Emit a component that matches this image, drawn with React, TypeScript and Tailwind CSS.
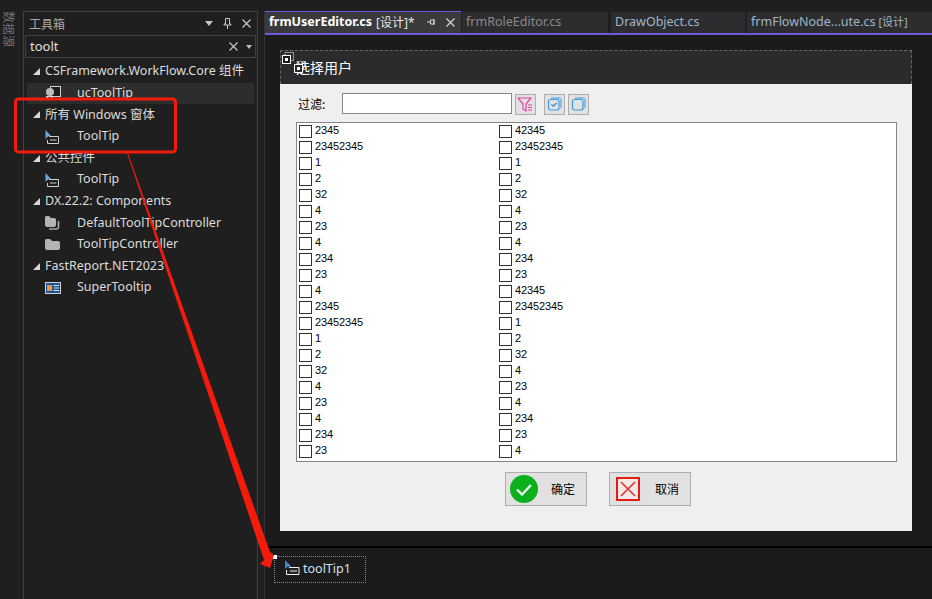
const left = ["2345","23452345","1","2","32","4","23","4","234","23","4","2345","23452345","1","2","32","4","23","4","234","23"];
const right = ["42345","23452345","1","2","32","4","23","4","234","23","42345","23452345","1","2","32","4","23","4","234","23","4"];

function PointerIcon() {
  return (
    <svg width="14" height="14" viewBox="0 0 14 14" className="shrink-0">
      <path d="M0.5 0 L0.5 9 L2.5 7 L3.5 6 L6 6 Z" fill="#6fa8dc" />
      <path d="M4 6.5 H13.5 V13.5 H2.5 V10" fill="none" stroke="#cfcfcf" strokeWidth="1" />
      <path d="M5 10 H11.5" stroke="#cfcfcf" strokeWidth="1" />
    </svg>
  );
}
function UserCtlIcon() {
  return (
    <svg width="16" height="14" viewBox="0 0 16 14" className="shrink-0">
      <rect x="5.5" y="0.5" width="10" height="10" fill="#1c1c1c" stroke="#cfcfcf" />
      <circle cx="5" cy="6" r="4" fill="#bdbdbd" />
      <rect x="1" y="10" width="7" height="4" fill="#cfcfcf" />
      <rect x="3.5" y="11" width="2" height="2" fill="#222" />
    </svg>
  );
}
function FolderIcon({ stacked }: { stacked?: boolean }) {
  return stacked ? (
    <svg width="15" height="14" viewBox="0 0 15 14" className="shrink-0">
      <path d="M13.5 5 V11 Q13.5 13 11 13 H4" fill="none" stroke="#a8a8a8" strokeWidth="1.6" />
      <path d="M0 1.5 Q0 0 1.5 0 H4 L6 2 H9 Q11 2 11 4 V9 Q11 11 9 11 H2 Q0 11 0 9 Z" fill="#b4b4b4" />
    </svg>
  ) : (
    <svg width="15" height="11" viewBox="0 0 15 11" className="shrink-0">
      <path d="M0 1.5 Q0 0 1.5 0 H5 L7 2 H13 Q15 2 15 4 V9 Q15 11 13 11 H2 Q0 11 0 9 Z" fill="#b4b4b4" />
    </svg>
  );
}
function SuperIcon() {
  return (
    <svg width="16" height="12" viewBox="0 0 16 12" className="shrink-0">
      <rect x="0.5" y="0.5" width="15" height="11" fill="#1c4f94" stroke="#d0d0d0" />
      <rect x="2" y="3" width="5" height="6" fill="#e9963c" />
      <path d="M8.5 3.5 H14 M8.5 6 H14 M8.5 8.5 H14" stroke="#dbe6f4" />
    </svg>
  );
}
function GridIcon({ fill }: { fill: string }) {
  return (
    <svg width="12" height="12" viewBox="0 0 12 12">
      <path d="M3 3 V0.5 H11.5 V8.5 H9" fill="none" stroke="#fff" strokeDasharray="1 1" />
      <rect x="0.5" y="3.5" width="8" height="8" fill={fill} stroke="#fff" />
      <rect x="3" y="6" width="3" height="3" fill="#fff" />
    </svg>
  );
}

function Group({ label }: { label: string }) {
  return (
    <div className="h-[21.6px] flex items-center pl-[9px] text-[#dcdcdc]">
      <svg width="7" height="7" viewBox="0 0 7 7" className="shrink-0 mr-[5px]">
        <path d="M7 0 V7 H0 Z" fill="#d8d8d8" />
      </svg>
      <span className="whitespace-nowrap">{label}</span>
    </div>
  );
}
function Item({ label, icon, selected }: { label: string; icon: React.ReactNode; selected?: boolean }) {
  return (
    <div className={"h-[21.6px] flex items-center pl-[18px] mx-[3px] text-[#dcdcdc] " + (selected ? "bg-[#2d2d2d]" : "")}>
      <span className="w-[32px] shrink-0 flex items-center">{icon}</span>
      <span className="whitespace-nowrap">{label}</span>
    </div>
  );
}

function Tab({ children, className }: { children: React.ReactNode; className: string }) {
  return (
    <div className={"h-[21px] flex items-center pl-[4px] bg-[#2d2d30] shrink-0 whitespace-nowrap text-[12.5px] " + className}>
      {children}
    </div>
  );
}

function Check({ label }: { label: string }) {
  return (
    <div className="h-[16px] flex items-center">
      <span className="w-[13px] h-[13px] border border-[#333] bg-white mr-[3px] shrink-0" />
      <span className="-mt-px text-[11px] leading-none tracking-[-0.1px] font-['Liberation_Sans',sans-serif] text-black">{label}</span>
    </div>
  );
}

function SmallBtn({ children, className }: { children: React.ReactNode; className?: string }) {
  return (
    <div className={"w-[21px] h-[21px] border border-[#adadad] bg-[#e1e1e1] flex items-center justify-center " + (className ?? "")}>
      {children}
    </div>
  );
}

function FormBtn({ label, icon }: { label: string; icon: React.ReactNode }) {
  return (
    <div className="w-[82px] h-[34px] border border-[#adadad] bg-[#e1e1e1] flex items-center pl-[4px]">
      <span className="w-[28px] h-[28px] shrink-0 flex items-center justify-center">{icon}</span>
      <span className="ml-[13px] text-[12px] text-black font-['Noto_Sans_CJK_SC',sans-serif]">{label}</span>
    </div>
  );
}

export default function App() {
  return (
    <div className="relative w-[932px] h-[599px] overflow-hidden bg-[#1f1f1f] flex font-['Noto_Sans','Noto_Sans_CJK_SC',sans-serif]">
      {/* side strip */}
      <div className="w-[23px] shrink-0 pt-[11px] pl-[3px]">
        <div className="[writing-mode:vertical-rl] [text-orientation:sideways] text-[12px] leading-[12px] text-[#70707e] font-['Noto_Sans_CJK_SC',sans-serif]">数据源</div>
      </div>

      {/* toolbox */}
      <div className="w-[235px] shrink-0 mt-[11px] border-l border-r border-t border-[#3f3f46] flex flex-col text-[12.5px]">
        <div className="h-[23px] flex items-center pl-[5px] pr-[6px] text-[#a8a8a8] font-['Noto_Sans_CJK_SC',sans-serif]">
          <span className="text-[12px]">工具箱</span>
          <div className="ml-auto flex items-center gap-[10px]">
            <svg width="8" height="5" viewBox="0 0 8 5"><path d="M0 0 H8 L4 5 Z" fill="#c8c8c8" /></svg>
            <svg width="9" height="11" viewBox="0 0 9 11"><path d="M2.5 0.5 H6.5 V6 H8 V7 H1 V6 H2.5 Z M4.5 7 V11" fill="none" stroke="#c8c8c8" /></svg>
            <svg width="9" height="9" viewBox="0 0 9 9"><path d="M0.5 0.5 L8.5 8.5 M8.5 0.5 L0.5 8.5" stroke="#c8c8c8" strokeWidth="1.2" /></svg>
          </div>
        </div>
        <div className="h-[23px] mx-px border border-[#3f3f46] flex items-center pl-[4px] pr-[3px] text-[#e0e0e0] text-[13px]">
          <span>toolt</span>
          <svg width="9" height="9" viewBox="0 0 9 9" className="ml-auto"><path d="M0.5 0.5 L8.5 8.5 M8.5 0.5 L0.5 8.5" stroke="#bdbdbd" strokeWidth="1.4" /></svg>
          <svg width="6" height="4" viewBox="0 0 6 4" className="ml-[8px]"><path d="M0 0 H6 L3 4 Z" fill="#bdbdbd" /></svg>
        </div>
        <div className="pt-[3px] flex flex-col">
          <Group label="CSFramework.WorkFlow.Core 组件" />
          <Item label="ucToolTip" icon={<UserCtlIcon />} selected />
          <Group label="所有 Windows 窗体" />
          <Item label="ToolTip" icon={<PointerIcon />} />
          <Group label="公共控件" />
          <Item label="ToolTip" icon={<PointerIcon />} />
          <Group label="DX.22.2: Components" />
          <Item label="DefaultToolTipController" icon={<FolderIcon stacked />} />
          <Item label="ToolTipController" icon={<FolderIcon />} />
          <Group label="FastReport.NET2023" />
          <Item label="SuperTooltip" icon={<SuperIcon />} />
        </div>
      </div>

      {/* document area */}
      <div className="ml-[6px] flex-1 min-w-0 mt-[11px] flex flex-col border-l border-[#333337]">
        <div className="h-[22px] flex items-end shrink-0">
          <div className="w-[196px] h-[22px] border-t-[1px] border-[#6a5ae0] bg-[#3a3a3d] flex items-center pl-[4px] text-[12.5px] font-bold text-white whitespace-nowrap mr-px shrink-0">
            <span>frmUserEditor.cs</span>
            <span className="ml-[4px] font-normal text-[12px] text-[#e8e8e8]">[设计]*</span>
            <svg width="10" height="7" viewBox="0 0 10 7" className="ml-[12px]"><path d="M3.5 1 H7 V5 H3.5 Z M0 3 H3.5 M7 0 V6" fill="none" stroke="#d8d8d8" /></svg>
            <svg width="9" height="9" viewBox="0 0 9 9" className="ml-[9px]"><path d="M0.5 0.5 L8.5 8.5 M8.5 0.5 L0.5 8.5" stroke="#d0d0d0" strokeWidth="1.3" /></svg>
          </div>
          <Tab className="w-[146px] mr-[3px] text-[#8a8a8a]">frmRoleEditor.cs</Tab>
          <Tab className="w-[134px] mr-[2px] text-[#9fb6c8]">DrawObject.cs</Tab>
          <Tab className="w-[185px] text-[#9fb6c8]">
            <span>frmFlowNode...ute.cs </span>
            <span className="ml-[3px] text-[11px]">[设计]</span>
          </Tab>
        </div>
        <div className="h-[2px] bg-[#6a5ae0] shrink-0" />

        {/* designer */}
        <div className="h-[511px] shrink-0 bg-[#1b1b1b] pt-[15px] pl-[15px]">
          <div className="relative w-[632px] h-[481px] flex flex-col">
            <div className="h-[34px] shrink-0 border border-dashed border-[#666] border-b-0 bg-[#2b2b2b] flex items-center pl-[15px] text-[14px] text-white font-['Noto_Sans_CJK_SC',sans-serif]">
              选择用户
            </div>
            <div className="absolute left-[2px] top-[2px]"><GridIcon fill="#1b1b1b" /></div>
            <div className="absolute left-[14px] top-[11px]"><GridIcon fill="#2b2b2b" /></div>

            <div className="flex-1 bg-[#efefef] flex flex-col pl-[16px]">
              <div className="h-[38px] shrink-0 flex items-start pt-[9px] text-black">
                <span className="w-[2px]" />
                <span className="w-[44px] text-[12px] leading-[21px] font-['Noto_Sans_CJK_SC',sans-serif]">过滤:</span>
                <div className="w-[170px] h-[21px] bg-white border border-[#85858f] mr-[3px]" />
                <SmallBtn className="mt-px">
                  <svg width="17" height="17" viewBox="0 0 17 17">
                    <path d="M1 2 H14 L9 8 V15 L6 13 V8 Z" fill="none" stroke="#e0479e" strokeWidth="1.2" />
                    <path d="M11 9 H15 M11 11.5 H15 M11 14 H15" stroke="#e0479e" strokeWidth="1.2" />
                  </svg>
                </SmallBtn>
                <SmallBtn className="mt-px ml-[8px]">
                  <svg width="15" height="15" viewBox="0 0 15 15">
                    <path d="M4 1 H12 Q14 1 14 3 V11" fill="none" stroke="#3b9bdc" />
                    <rect x="1.5" y="2.5" width="10.5" height="10.5" rx="2" fill="none" stroke="#3b9bdc" strokeWidth="1.2" />
                    <path d="M4.5 7.5 L6.3 9.3 L9.5 6" fill="none" stroke="#3b78c8" strokeWidth="1.1" />
                  </svg>
                </SmallBtn>
                <SmallBtn className="mt-px ml-[3px]">
                  <svg width="15" height="15" viewBox="0 0 15 15">
                    <path d="M4 1 H12 Q14 1 14 3 V11" fill="none" stroke="#3b9bdc" />
                    <rect x="1.5" y="2.5" width="10.5" height="10.5" rx="2" fill="none" stroke="#3b9bdc" strokeWidth="1.2" />
                  </svg>
                </SmallBtn>
              </div>
              <div className="w-[601px] h-[340px] shrink-0 bg-white border border-[#85858f] flex pl-[2px]">
                <div className="w-[200px] flex flex-col">
                  {left.map((t, i) => <Check key={i} label={t} />)}
                </div>
                <div className="flex flex-col">
                  {right.map((t, i) => <Check key={i} label={t} />)}
                </div>
              </div>
              <div className="flex pt-[10px] pl-[209px] gap-[22px]">
                <FormBtn
                  label="确定"
                  icon={
                    <svg width="28" height="28" viewBox="0 0 28 28">
                      <circle cx="14" cy="14" r="14" fill="#0cb01c" />
                      <path d="M7 14.5 L12 19.5 L21 10" fill="none" stroke="#e6f5e6" strokeWidth="2.4" />
                    </svg>
                  }
                />
                <FormBtn
                  label="取消"
                  icon={
                    <svg width="24" height="24" viewBox="0 0 24 24">
                      <rect x="1" y="1" width="22" height="22" fill="#f4e8e8" stroke="#e01e12" strokeWidth="2" />
                      <path d="M5 5 L19 19 M19 5 L5 19" stroke="#e0382c" strokeWidth="1.6" />
                    </svg>
                  }
                />
              </div>
            </div>
          </div>
        </div>

        {/* tray */}
        <div className="h-[2px] bg-black shrink-0" />
        <div className="flex-1 bg-[#1b1b1b] pt-[8px] pl-[9px]">
          <div className="relative w-[92px] h-[27px] border border-dotted border-[#8a8a8a] flex items-center pl-[9px]">
            <span className="absolute -left-[2px] -top-[2px] w-[4px] h-[4px] bg-white" />
            <svg width="16" height="16" viewBox="0 0 16 16" className="shrink-0 -mt-[3px]">
              <path d="M1 0 L1 9 L3.2 7 L5 7 L7 6 Z" fill="#3f83d0" />
              <path d="M5 7.5 H15 V14.5 H2.5 V10" fill="#222" stroke="#f0f0f0" />
              <path d="M6 11 H13" stroke="#f0f0f0" />
            </svg>
            <span className="ml-[3px] text-[12.5px] text-[#cfe0f0]">toolTip1</span>
          </div>
        </div>
      </div>

      {/* red annotation over the page */}
      <svg width="932" height="599" viewBox="0 0 932 599" className="absolute inset-0 pointer-events-none">
        <rect x="15.5" y="99" width="160" height="53" rx="3" fill="none" stroke="#f41a0c" strokeWidth="3" />
        <path d="M127 153 L128 153 L270 552 L274 555 L270 568 L260 564 L264 560 Z" fill="#f41a0c" />
      </svg>
    </div>
  );
}
